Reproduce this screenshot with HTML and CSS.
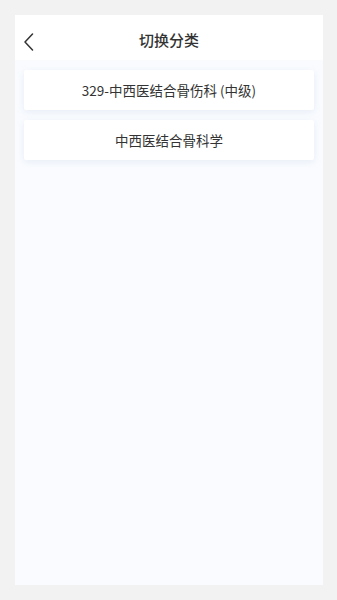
FILE: index.html
```html
<!DOCTYPE html>
<html lang="zh-CN">
<head>
<meta charset="UTF-8">
<meta name="viewport" content="width=device-width, initial-scale=1.0">
<title>切换分类</title>
<link rel="stylesheet" href="styles.css">
</head>
<body>
<div class="panel">
  <div class="header">
    <button class="backBtn" aria-label="返回">
      <svg width="12" height="18" viewBox="0 0 12 18"><path d="M9.5 1 L2 9 L9.5 17" fill="none" stroke="#333" stroke-width="1.5" stroke-linecap="round" stroke-linejoin="round"/></svg>
    </button>
    <h1>切换分类</h1>
  </div>
  <div class="list">
    <div class="item">329-中西医结合骨伤科 (中级)</div>
    <div class="item">中西医结合骨科学</div>
  </div>
</div>
</body>
</html>
```

FILE: styles.css
```css
html, body { margin:0; padding:0; }
body { font-family:"Noto Sans CJK SC","Noto Sans",sans-serif; background:#f2f2f2; padding:15px 14px 15px 15px; box-sizing:border-box; height:600px; }
.panel { height:570px; background:#f9fbfe; display:flex; flex-direction:column; }
.header { position:relative; height:45px; box-sizing:border-box; padding-top:4px; background:#fff; display:flex; align-items:center; justify-content:center; }
.header h1 { margin:0; font-size:15px; font-weight:500; color:#333; }
.backBtn { position:absolute; left:8px; top:18px; background:transparent; border:none; padding:0; width:12px; height:18px; cursor:pointer; }
.backBtn svg { display:block; }
.list { display:flex; flex-direction:column; gap:10px; padding:10px 9px 0 9px; }
.item { height:40px; background:#fff; display:flex; align-items:center; justify-content:center; font-size:13.5px; color:#333; border-radius:2px; box-shadow:0 2px 6px rgba(200,215,235,0.35); }
```
